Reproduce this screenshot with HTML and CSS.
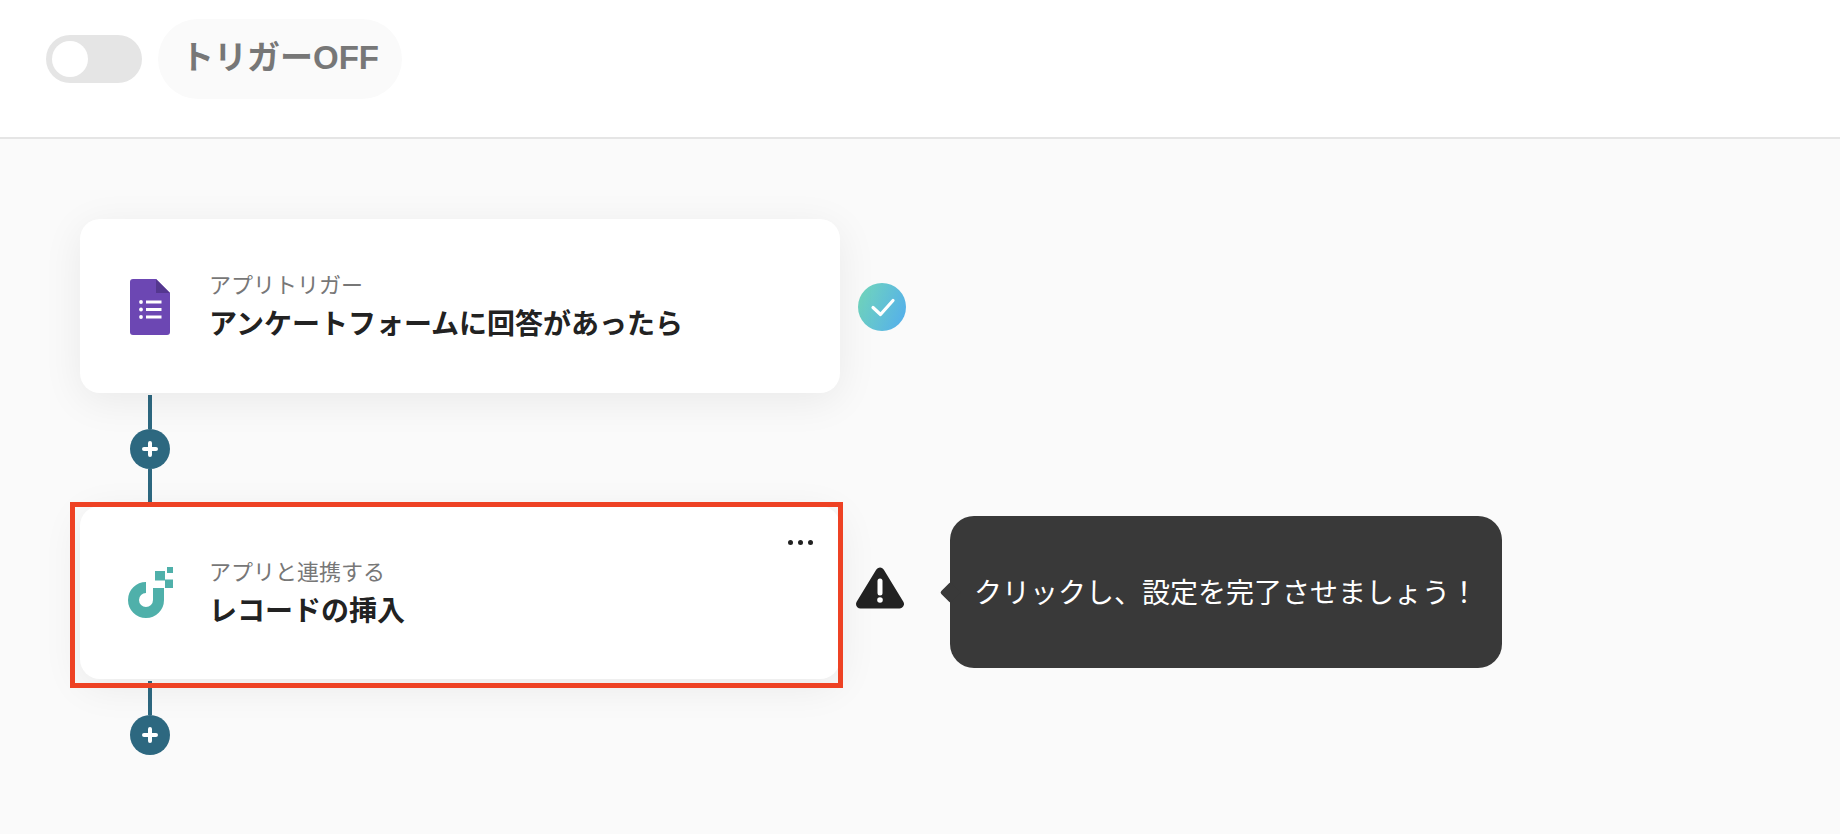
FILE: index.html
```html
<!DOCTYPE html>
<html lang="ja">
<head>
<meta charset="utf-8">
<title>トリガー</title>
<link rel="stylesheet" href="styles.css">
</head>
<body>
<header class="topbar">
  <div class="toggle"><span class="knob"></span></div>
  <div class="status-pill">トリガーOFF</div>
</header>
<main class="canvas">
  <section class="row row-first">
    <div class="card">
      <div class="icon-slot">
        <svg class="icon-forms" viewBox="0 0 40 56" aria-hidden="true">
          <path d="M3 0H26L40 14V53a3 3 0 0 1-3 3H3a3 3 0 0 1-3-3V3a3 3 0 0 1 3-3Z" fill="#6c47b3"/>
          <path d="M26 0L40 14H26Z" fill="#54378f"/>
          <g fill="#fff">
            <circle cx="11" cy="23" r="1.9"/><circle cx="11" cy="30.5" r="1.9"/><circle cx="11" cy="38" r="1.9"/>
            <rect x="16" y="21.5" width="15.5" height="3"/><rect x="16" y="29" width="15.5" height="3"/><rect x="16" y="36.5" width="15.5" height="3"/>
          </g>
        </svg>
      </div>
      <div class="card-text">
        <div class="card-label">アプリトリガー</div>
        <div class="card-title">アンケートフォームに回答があったら</div>
      </div>
    </div>
    <svg class="status-check" viewBox="0 0 48 48" aria-hidden="true">
      <defs><linearGradient id="chk" x1="0" y1="0.3" x2="1" y2="0.7"><stop offset="0" stop-color="#70d4bd"/><stop offset="1" stop-color="#55b0ea"/></linearGradient></defs>
      <circle cx="24" cy="24" r="24" fill="url(#chk)"/>
      <path d="M15 24.5L22.5 31.5L35 17.5" fill="none" stroke="#fff" stroke-width="3.2" stroke-linecap="round" stroke-linejoin="round"/>
    </svg>
  </section>

  <div class="connector">
    <span class="line line-top"></span>
    <span class="plus"><svg viewBox="0 0 16 16" aria-hidden="true"><path d="M8 2v12M2 8h12" stroke="#fff" stroke-width="4" stroke-linecap="round"/></svg></span>
    <span class="line line-bottom"></span>
  </div>

  <section class="row row-second">
    <div class="card card-active">
      <div class="icon-slot">
        <svg class="icon-yoom" viewBox="0 0 45 51" aria-hidden="true">
          <path d="M18 20.5A12.5 12.5 0 1 0 30.5 33V21" fill="none" stroke="#4fb0aa" stroke-width="11"/>
          <rect x="27" y="4" width="10" height="9.5" fill="#4fb0aa"/>
          <rect x="37" y="12.5" width="8" height="8.5" fill="#4fb0aa"/>
          <rect x="39" y="0" width="6" height="6" fill="#4fb0aa"/>
        </svg>
      </div>
      <div class="card-text">
        <div class="card-label">アプリと連携する</div>
        <div class="card-title">レコードの挿入</div>
      </div>
      <div class="menu-dots"><span></span><span></span><span></span></div>
      <div class="highlight"></div>
    </div>
    <svg class="status-warn" viewBox="0 0 48 42" aria-hidden="true">
      <path d="M24 5L43.5 37H4.5Z" fill="#222" stroke="#222" stroke-width="9" stroke-linejoin="round"/>
      <path d="M24 14V26" stroke="#fff" stroke-width="5" stroke-linecap="round"/>
      <circle cx="24" cy="33" r="2.8" fill="#fff"/>
    </svg>
    <div class="tooltip">クリックし、設定を完了させましょう！</div>
  </section>

  <div class="connector connector-last">
    <span class="line line-top"></span>
    <span class="plus"><svg viewBox="0 0 16 16" aria-hidden="true"><path d="M8 2v12M2 8h12" stroke="#fff" stroke-width="4" stroke-linecap="round"/></svg></span>
  </div>
</main>
</body>
</html>
```
FILE: styles.css
```css
* { box-sizing: border-box; }
html, body { margin: 0; height: 100%; }
body {
  background: #fafafa;
  font-family: "Noto Sans CJK JP", "Noto Sans", sans-serif;
  color: #222;
  overflow: hidden;
}
.topbar {
  height: 139px;
  padding: 0 0 19px 46px;
  display: flex;
  align-items: center;
  gap: 16px;
  background: #fff;
  border-bottom: 2px solid #e5e5e5;
}
.toggle {
  width: 96px;
  height: 48px;
  padding: 6px;
  border-radius: 24px;
  background: #e5e5e5;
}
.knob {
  display: block;
  width: 36px;
  height: 36px;
  border-radius: 50%;
  background: #fff;
}
.status-pill {
  width: 244px;
  height: 80px;
  padding-bottom: 2px;
  border-radius: 40px;
  background: #fafafa;
  color: #777;
  font-family: "Liberation Sans", "Noto Sans CJK JP", sans-serif;
  font-size: 33px;
  line-height: 48px;
  font-weight: 700;
  display: flex;
  align-items: center;
  justify-content: center;
}
.canvas {
  padding: 80px 0 0 80px;
}
.row {
  display: flex;
  align-items: center;
}
.card {
  position: relative;
  width: 760px;
  height: 174px;
  padding-left: 40px;
  display: flex;
  align-items: center;
  gap: 30px;
  background: #fff;
  border-radius: 20px;
  box-shadow: 0 8px 40px rgba(0, 0, 0, 0.07);
}
.card-active { height: 173px; }
.icon-slot {
  width: 60px;
  display: flex;
  justify-content: center;
}
.icon-forms { width: 40px; height: 56px; margin-top: 2px; display: block; }
.icon-yoom { width: 45px; height: 51px; display: block; }
.card-text {
  margin-left: -1px;
  padding-bottom: 2px;
  display: flex;
  flex-direction: column;
  gap: 4px;
}
.card-label {
  font-size: 22px;
  line-height: 30px;
  color: #777;
}
.card-title {
  font-size: 28px;
  line-height: 40px;
  font-weight: 700;
  color: #222;
}
.status-check {
  width: 48px;
  height: 48px;
  margin: 2px 0 0 18px;
  flex: none;
}
.connector {
  width: 40px;
  height: 113px;
  margin-left: 50px;
  padding-top: 2px;
  display: flex;
  flex-direction: column;
  align-items: center;
}
.connector-last { height: auto; }
.line {
  display: block;
  width: 4px;
  background: #2d6880;
}
.line-top { height: 34px; }
.line-bottom { height: 37px; }
.plus {
  width: 40px;
  height: 40px;
  flex: none;
  border-radius: 50%;
  background: #2d6880;
  display: flex;
  align-items: center;
  justify-content: center;
}
.plus svg { width: 16px; height: 16px; display: block; }
.menu-dots {
  position: absolute;
  top: 34px;
  right: 27px;
  display: flex;
  gap: 5px;
}
.menu-dots span {
  width: 5px;
  height: 5px;
  border-radius: 50%;
  background: #222;
}
.highlight {
  position: absolute;
  top: -4px;
  left: -10px;
  right: -3px;
  bottom: -9px;
  border: 5px solid #ee4224;
}
.status-warn {
  width: 48px;
  height: 42px;
  margin: 0 46px 9px 16px;
  flex: none;
}
.tooltip {
  position: relative;
  width: 552px;
  height: 152px;
  margin-bottom: 1px;
  padding-bottom: 3px;
  border-radius: 24px;
  background: #393939;
  color: #fff;
  font-size: 28px;
  display: flex;
  align-items: center;
  justify-content: center;
  white-space: nowrap;
}
.tooltip::before {
  content: "";
  position: absolute;
  left: -7px;
  top: 50%;
  width: 15px;
  height: 15px;
  margin-top: -7px;
  background: #393939;
  border-radius: 2px;
  transform: rotate(45deg);
}
```
